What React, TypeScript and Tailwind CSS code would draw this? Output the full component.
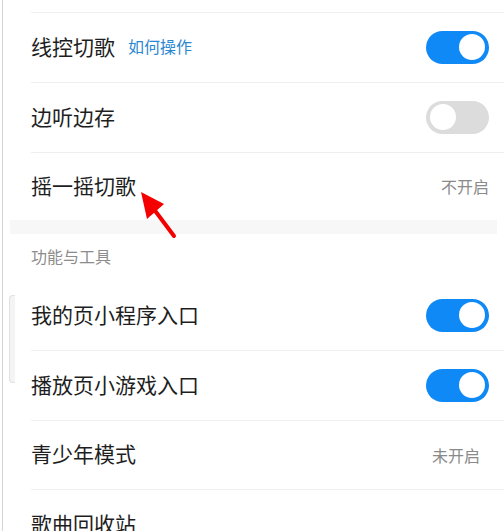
import React from 'react'

const font = { fontFamily: '"Noto Sans CJK SC", "Noto Sans", sans-serif' }

function Toggle({ on }: { on: boolean }) {
  return (
    <div
      className={
        on
          ? 'w-[63px] h-[33px] rounded-full bg-[#0f89f5] flex items-center justify-end px-[4px]'
          : 'w-[63px] h-[33px] rounded-full bg-[#dcdcdc] flex items-center justify-start px-[4px]'
      }
    >
      <div className="w-[26px] h-[26px] rounded-full bg-white" />
    </div>
  )
}

function Row({
  label,
  extra,
  right,
  top = true,
  pr = 'pr-[15px]',
  h = 'h-[70px]',
}: {
  label: string
  extra?: React.ReactNode
  right?: React.ReactNode
  top?: boolean
  pr?: string
  h?: string
}) {
  return (
    <div className={`${h} flex items-center justify-between ${pr} ${top ? 'border-t border-[#efefef]' : ''}`}>
      <div className="flex items-center mb-[3px]">
        <span className="text-[21px] text-[#1e1e1e] leading-none">{label}</span>
        {extra}
      </div>
      <div className="mb-[1px]">{right}</div>
    </div>
  )
}

export default function App() {
  return (
    <div className="relative w-[504px] h-[531px] overflow-hidden bg-white" style={font}>
      {/* left edge line */}
      <div className="absolute left-[2px] top-0 bottom-0 w-px bg-[#d4d4d4]" />
      {/* left side tab */}
      <div className="absolute left-[9px] top-[295px] w-[6px] h-[88px] rounded-l-[4px] border border-r-0 border-[#e2e2e2] bg-[#f4f4f4]" />

      <div className="h-[12px]" />
      <div className="ml-[31px]">
        <Row
          label="线控切歌"
          extra={<span className="ml-[13px] text-[16px] text-[#2b87d1] leading-none">如何操作</span>}
          right={<Toggle on />}
        />
        <Row label="边听边存" right={<Toggle on={false} />} />
        <Row
          label="摇一摇切歌"
          h="h-[68px]"
          right={<span className="text-[16px] text-[#8a8a8a] leading-none">不开启</span>}
        />
      </div>

      {/* section gap */}
      <div className="ml-[10px] mr-[7px] h-[14px] bg-[#f7f7f7]" />

      <div className="h-[47px] flex items-center pl-[31px]">
        <span className="text-[16px] text-[#8c8c8c] leading-none mb-[3px]">功能与工具</span>
      </div>

      <div className="ml-[31px]">
        <Row label="我的页小程序入口" top={false} h="h-[69px]" right={<Toggle on />} />
        <Row label="播放页小游戏入口" right={<Toggle on />} />
        <Row
          label="青少年模式"
          h="h-[69px]"
          pr="pr-[24px]"
          right={<span className="text-[16px] text-[#8a8a8a] leading-none">未开启</span>}
        />
        <Row label="歌曲回收站" />
      </div>

      {/* red annotation arrow */}
      <svg className="absolute left-0 top-0" width="504" height="531" viewBox="0 0 504 531">
        <line x1="174" y1="236" x2="153" y2="208" stroke="#f40000" strokeWidth="4" strokeLinecap="round" />
        <polygon points="141,192 164,204 147,219" fill="#f40000" />
      </svg>
    </div>
  )
}
